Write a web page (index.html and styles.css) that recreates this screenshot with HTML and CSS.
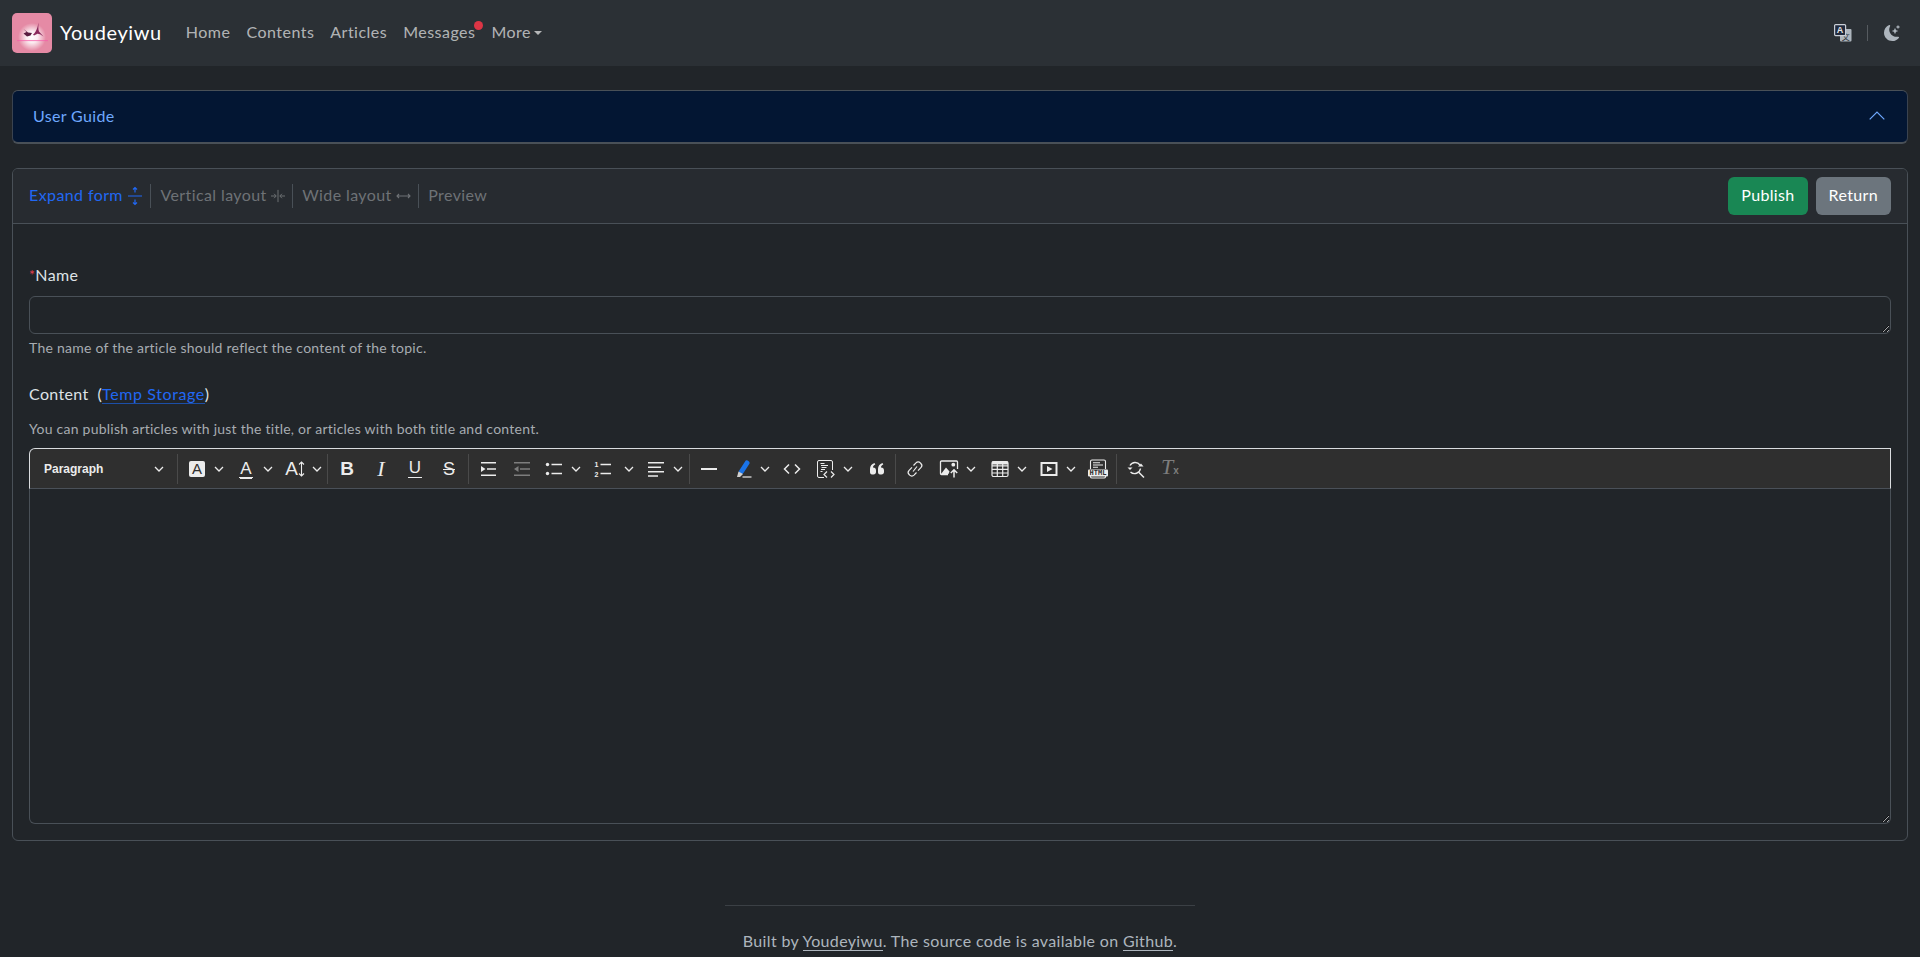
FILE: index.html
```html
<!DOCTYPE html>
<html lang="en">
<head>
  <meta charset="UTF-8">
  <title>Youdeyiwu - New Article</title>
  <link rel="stylesheet" href="styles.css">
</head>
<body>

<svg class="defs" width="0" height="0">
  <symbol id="chev" viewBox="0 0 10 10"><path d="M1 3 5 7 9 3" fill="none" stroke="currentColor" stroke-width="1.3"/></symbol>
  <radialGradient id="glow">
    <stop offset="0" stop-color="#fff"/>
    <stop offset="0.4" stop-color="#fff" stop-opacity="0.85"/>
    <stop offset="1" stop-color="#fff" stop-opacity="0"/>
  </radialGradient>
</svg>

<nav class="navbar">
  <a class="brand" href="#">
    <svg class="logo" viewBox="0 0 40 40">
      <rect width="40" height="40" rx="5" fill="#e58aa5"/>
      <ellipse cx="20" cy="24" rx="14" ry="14" fill="url(#glow)"/>
      <rect x="5" y="27.300" width="31" height="0.800" fill="#f55fa8"/>
      <path d="M21 21.500C24 19.500 25.500 15 26.500 9.500c0 4-.5 7 .5 9l4.500 5C28 21 26 20.500 25 21l-3 1.500z" fill="#8a2a5c"/>
      <path d="M11.500 16l4.500 3.500 4 .5-1.500 2.500-3.500 1-3.500-3 3-1.500z" fill="#5a1c40"/>
    </svg>
    <span class="brand-name">Youdeyiwu</span>
  </a>
  <ul class="nav-links">
    <li><a href="#">Home</a></li>
    <li><a href="#">Contents</a></li>
    <li><a href="#">Articles</a></li>
    <li class="has-badge"><a href="#">Messages</a><span class="badge"></span></li>
    <li><a href="#" class="caret">More</a></li>
  </ul>
  <div class="nav-right">
    <svg class="translate" width="18" height="18" viewBox="0 0 18 18">
      <rect x="6" y="5" width="11.500" height="12.500" rx="1" fill="#adb5bd"/>
      <text x="11.800" y="15.500" class="zh">文</text>
      <rect x="0.600" y="0.600" width="11" height="11" rx="1" fill="#212a3d" stroke="#c9ced6" stroke-width="1.200"/>
      <text x="6.100" y="9.300" class="en">A</text>
    </svg>
    <span class="nav-sep"></span>
    <svg width="16" height="16" viewBox="0 0 16 16" fill="#adb5bd">
      <path d="M6 .278a.768.768 0 0 1 .08.858 7.208 7.208 0 0 0-.878 3.46c0 4.021 3.278 7.277 7.318 7.277.527 0 1.04-.055 1.533-.16a.787.787 0 0 1 .81.316.733.733 0 0 1-.031.893A8.349 8.349 0 0 1 8.344 16C3.734 16 0 12.286 0 7.71 0 4.266 2.114 1.312 5.124.06A.752.752 0 0 1 6 .278z"/>
      <path d="M10.794 3.148a.217.217 0 0 1 .412 0l.387 1.162c.173.518.579.924 1.097 1.097l1.162.387a.217.217 0 0 1 0 .412l-1.162.387a1.734 1.734 0 0 0-1.097 1.097l-.387 1.162a.217.217 0 0 1-.412 0l-.387-1.162A1.734 1.734 0 0 0 9.31 6.593l-1.162-.387a.217.217 0 0 1 0-.412l1.162-.387a1.734 1.734 0 0 0 1.097-1.097l.387-1.162zM13.863.099a.145.145 0 0 1 .274 0l.258.774c.115.346.386.617.732.732l.774.258a.145.145 0 0 1 0 .274l-.774.258a1.156 1.156 0 0 0-.732.732l-.258.774a.145.145 0 0 1-.274 0l-.258-.774a1.156 1.156 0 0 0-.732-.732l-.774-.258a.145.145 0 0 1 0-.274l.774-.258c.346-.115.617-.386.732-.732L13.863.1z"/>
    </svg>
  </div>
</nav>

<main class="content">

  <div class="guide">
    <span>User Guide</span>
    <svg width="18" height="18" viewBox="0 0 16 16"><path d="M1.500 11 8 4.500 14.500 11" fill="none" stroke="currentColor" stroke-width="1.100"/></svg>
  </div>

  <section class="card">
    <div class="card-header">
      <div class="tabs">
        <a class="tab active" href="#">Expand form
          <svg width="16" height="20" viewBox="0 0 16 20" fill="none" stroke="currentColor" stroke-width="1.200"><path d="M1 10h14M8 1.500v5M6 3.500l2-2 2 2M8 18.500v-5M6 16.500l2 2 2-2"/></svg>
        </a>
        <a class="tab" href="#">Vertical layout
          <svg width="14" height="20" viewBox="0 0 16 20" fill="none" stroke="currentColor" stroke-width="1.100"><path d="M8 3v14M0 10h5.500M3.500 7.500 6 10l-2.500 2.500M16 10h-5.500M12.500 7.500 10 10l2.500 2.500"/></svg>
        </a>
        <a class="tab" href="#">Wide layout
          <svg width="15" height="20" viewBox="0 0 15 20" fill="none" stroke="currentColor" stroke-width="1.100"><path d="M1 10h13M3 8l-2 2 2 2M12 8l2 2-2 2"/></svg>
        </a>
        <a class="tab" href="#">Preview</a>
      </div>
      <div class="actions">
        <button class="btn btn-green">Publish</button>
        <button class="btn btn-gray">Return</button>
      </div>
    </div>

    <div class="card-body">
      <label class="field-label"><span class="star">*</span>Name</label>
      <textarea class="name-input" rows="1"></textarea>
      <div class="help">The name of the article should reflect the content of the topic.</div>

      <div class="field-label content-label">Content&nbsp; (<a href="#">Temp Storage</a>)</div>
      <div class="help help-top">You can publish articles with just the title, or articles with both title and content.</div>

      <div class="editor">
        <div class="toolbar">
          <div class="tb-para"><span>Paragraph</span><svg class="chev"><use href="#chev"/></svg></div>
          <i class="tb-sep"></i>

          <div class="tb-dd"><span class="tb-icon"><b class="letter-box">A</b></span><svg class="chev"><use href="#chev"/></svg></div>
          <div class="tb-dd"><span class="tb-icon"><span class="letter letter-line">A</span></span><svg class="chev"><use href="#chev"/></svg></div>
          <div class="tb-dd tb-narrow"><span class="tb-icon"><span class="letter letter-big">A</span><svg width="7" height="16" viewBox="0 0 7 16" fill="none" stroke="currentColor" stroke-width="1.100"><path d="M3.500 1v14M1 3.500l2.500-2.500L6 3.500M1 12.500 3.500 15 6 12.500"/></svg></span><svg class="chev"><use href="#chev"/></svg></div>
          <i class="tb-sep"></i>

          <span class="tb-icon"><span class="letter letter-bold">B</span></span>
          <span class="tb-icon"><span class="letter letter-italic">I</span></span>
          <span class="tb-icon"><span class="letter letter-under">U</span></span>
          <span class="tb-icon"><span class="letter letter-strike">S</span></span>
          <i class="tb-sep tb-sep-gap"></i>

          <span class="tb-icon">
            <svg width="20" height="20" viewBox="0 0 20 20" fill="currentColor"><path d="M3 3h15v1.500H3zM9 9.200h9v1.500H9zM3 15.600h15v1.500H3zM3 7l4.500 3L3 13z"/></svg>
          </span>
          <span class="tb-icon tb-off tb-short">
            <svg width="20" height="20" viewBox="0 0 20 20" fill="currentColor"><path d="M2 3h16v1.500H2zM8 9.200h10v1.500H8zM2 15.600h16v1.500H2zM6.500 7 2 10l4.500 3z"/></svg>
          </span>
          <div class="tb-dd">
            <span class="tb-icon"><svg width="20" height="20" viewBox="0 0 20 20" fill="currentColor"><circle cx="3.500" cy="5.500" r="1.700"/><circle cx="3.500" cy="14.500" r="1.700"/><path d="M7.500 4.700H18v1.500H7.500zM7.500 13.800H18v1.500H7.500z"/></svg></span>
            <svg class="chev"><use href="#chev"/></svg>
          </div>
          <div class="tb-dd tb-wide4">
            <span class="tb-icon"><svg width="20" height="20" viewBox="0 0 20 20" fill="currentColor"><text x="3.500" y="8" class="num">1</text><text x="3.500" y="18" class="num">2</text><path d="M7.500 4.700H18v1.500H7.500zM7.500 13.800H18v1.500H7.500z"/></svg></span>
            <svg class="chev"><use href="#chev"/></svg>
          </div>
          <div class="tb-dd">
            <span class="tb-icon"><svg width="20" height="20" viewBox="0 0 20 20" fill="currentColor"><path d="M2 3h16v1.500H2zM2 7.500h13v1.500H2zM2 12h16v1.500H2zM2 16.200h10v1.500H2z"/></svg></span>
            <svg class="chev"><use href="#chev"/></svg>
          </div>
          <i class="tb-sep"></i>

          <span class="tb-icon"><svg width="20" height="20" viewBox="0 0 20 20" fill="currentColor"><rect x="2" y="9" width="16" height="2"/></svg></span>
          <div class="tb-dd">
            <span class="tb-icon"><svg width="20" height="20" viewBox="0 0 20 20"><path d="M14 4 8.500 12.500" fill="none" stroke="#1a73e8" stroke-width="5" stroke-linecap="round"/><path d="M4 18l1.500-5.500 4.500 2.500-3 3z" fill="#cfcfcf"/><path d="M9.500 18h9" stroke="currentColor" stroke-width="1.200"/></svg></span>
            <svg class="chev"><use href="#chev"/></svg>
          </div>
          <span class="tb-icon"><svg width="20" height="20" viewBox="0 0 20 20" fill="none" stroke="currentColor" stroke-width="1.500"><path d="M7 5.500 2.500 10 7 14.500M13 5.500l4.500 4.500-4.500 4.500"/></svg></span>
          <div class="tb-dd tb-wide2">
            <span class="tb-icon"><svg width="20" height="20" viewBox="0 0 20 20" fill="none" stroke="currentColor" stroke-width="1"><path d="M8 18.500H3a1.500 1.500 0 0 1-1.500-1.500V3A1.500 1.500 0 0 1 3 1.500h12A1.500 1.500 0 0 1 16.500 3v8"/><path d="M4.500 4.500h4M5 6.500h7M5.500 8.500h5M5 10.500h4M4.500 12.500h2"/><path d="M11 12.500 8 15.500l3 3M15 12.500l3 3-3 3" stroke-width="1.200"/></svg></span>
            <svg class="chev"><use href="#chev"/></svg>
          </div>
          <span class="tb-icon"><svg width="20" height="20" viewBox="0 0 20 20" fill="currentColor"><path d="M3 10c0-3 1.500-5 4.500-6l.8 1.500C6.800 6.200 6 7 6 8.500c2 0 3 1 3 3v1.500c0 1.500-1 2.500-2.500 2.500H5c-1.300 0-2-1-2-2.500zM11 10c0-3 1.500-5 4.500-6l.8 1.500c-1.500.7-2.300 1.500-2.300 3 2 0 3 1 3 3v1.500c0 1.500-1 2.500-2.500 2.500H13c-1.300 0-2-1-2-2.500z"/></svg></span>
          <i class="tb-sep"></i>

          <span class="tb-icon"><svg width="20" height="20" viewBox="0 0 20 20" fill="none" stroke="currentColor" stroke-width="1.200"><path d="M8.500 6.500 11 3.800a3 3 0 0 1 4.300 0l.6.700a3 3 0 0 1 0 4.200L13 11.700"/><path d="M11.500 13.500 9 16.200a3 3 0 0 1-4.300 0l-.6-.7a3 3 0 0 1 0-4.200L7 8.300"/><path d="M8 12.500l4-5"/></svg></span>
          <div class="tb-dd tb-wide2">
            <span class="tb-icon"><svg width="20" height="20" viewBox="0 0 20 20"><path d="M9 15.500H2.500a1 1 0 0 1-1-1V3a1 1 0 0 1 1-1h15a1 1 0 0 1 1 1v7" fill="none" stroke="currentColor" stroke-width="1.300"/><path d="M2 15l5-6.500 3.500 4L9.500 15z" fill="currentColor"/><circle cx="14.300" cy="5.700" r="1.900" fill="currentColor"/><path d="M15 18.500V11M11.800 14l3.200-3.200 3.200 3.200" fill="none" stroke="currentColor" stroke-width="1.500"/></svg></span>
            <svg class="chev"><use href="#chev"/></svg>
          </div>
          <div class="tb-dd">
            <span class="tb-icon"><svg width="20" height="20" viewBox="0 0 20 20" fill="none" stroke="currentColor" stroke-width="1.200"><rect x="2" y="2.500" width="16" height="15" rx="1.500"/><path d="M2 2.500h16V5.500H2z" fill="currentColor" stroke="none"/><path d="M2 6.800h16M2 10.400h16M2 14h16M7.300 3v14M12.700 3v14"/></svg></span>
            <svg class="chev"><use href="#chev"/></svg>
          </div>
          <div class="tb-dd">
            <span class="tb-icon"><svg width="20" height="20" viewBox="0 0 20 20"><path fill-rule="evenodd" d="M1.500 3h17v14h-17zM3.500 5v10h13V5z" fill="currentColor"/><path d="M8 7l5.500 3L8 13z" fill="currentColor"/></svg></span>
            <svg class="chev"><use href="#chev"/></svg>
          </div>
          <span class="tb-icon"><svg width="20" height="20" viewBox="0 0 20 20" fill="none" stroke="currentColor" stroke-width="1.100"><path d="M2.500 10V2.500a1.500 1.500 0 0 1 1.500-1.500h12a1.500 1.500 0 0 1 1.500 1.500V10M2.500 17v1a1.500 1.500 0 0 0 1.500 1h12a1.500 1.500 0 0 0 1.500-1v-1"/><path d="M5 3.800h7M5 6h10M5 8.200h5"/><rect x="0" y="10.500" width="20" height="7" rx="1" fill="currentColor" stroke="none"/><text x="10" y="16.300" class="html-txt">HTML</text></svg></span>
          <i class="tb-sep"></i>

          <span class="tb-icon"><svg width="20" height="20" viewBox="0 0 20 20" fill="none" stroke="currentColor" stroke-width="1.500"><path d="M12.500 13 18 18.500"/><path d="M4 6.500A6 6 0 0 1 14 6M14.500 9.500a6 6 0 0 1-10 3.500" stroke-width="1.400"/><path d="M1.500 8.500h5L4 11z" fill="currentColor" stroke="none"/><path d="M12 7.500h5.500L15 4.500z" fill="currentColor" stroke="none"/></svg></span>
          <span class="tb-icon tb-off"><span class="letter letter-clear">T<small>x</small></span></span>
        </div>
        <div class="editor-body" contenteditable="true"></div>
      </div>
    </div>
  </section>

</main>

<footer class="footer">
  <hr>
  <p>Built by <a href="#">Youdeyiwu</a>. The source code is available on <a href="#">Github</a>.</p>
</footer>

</body>
</html>
```

FILE: styles.css
```css
* {
  box-sizing: border-box;
}
html, body {
  margin: 0;
}
body {
  font-family: "Lato", "Open Sans", sans-serif;
  font-size: 16px;
  line-height: 24px;
  letter-spacing: 0.35px;
  background-color: #212529;
  color: #dee2e6;
  overflow-x: hidden;
}
a {
  color: inherit;
  text-decoration: none;
}
.defs {
  position: absolute;
}

/* navbar */
.navbar {
  display: flex;
  align-items: center;
  height: 66px;
  padding: 0 12px;
  background-color: #2b3035;
}
.brand {
  display: flex;
  align-items: center;
  gap: 8px;
  color: #fff;
  font-size: 20px;
  letter-spacing: 0.62px;
  margin-right: 24px;
}
.brand-name {
  padding-bottom: 3px;
}
.logo {
  width: 40px;
  height: 40px;
  display: block;
}
.nav-links {
  display: flex;
  gap: 16px;
  list-style: none;
  margin: 0 0 2px;
  padding: 0;
  color: rgba(255,255,255,0.65);
  letter-spacing: 0.48px;
}
.has-badge {
  position: relative;
}
.badge {
  position: absolute;
  top: 1px;
  right: -8px;
  width: 9px;
  height: 9px;
  border-radius: 50%;
  background-color: #dc3545;
}
.caret::after {
  content: "";
  display: inline-block;
  margin-left: 3px;
  vertical-align: 3px;
  border-top: 4px solid;
  border-left: 4px solid transparent;
  border-right: 4px solid transparent;
}
.nav-right {
  margin-left: auto;
  display: flex;
  align-items: center;
  gap: 15px;
  padding-right: 8px;
}
.nav-sep {
  width: 1px;
  height: 16px;
  margin-right: 1px;
  background-color: #565b60;
}
.translate .zh {
  font-family: "Noto Sans CJK SC", sans-serif;
  font-size: 8px;
  text-anchor: middle;
  fill: #2b3035;
  letter-spacing: 0;
}
.translate .en {
  font-family: "Liberation Sans", sans-serif;
  font-size: 9px;
  font-weight: 700;
  text-anchor: middle;
  fill: #e6e8ea;
  letter-spacing: 0;
}

/* main */
.content {
  padding: 24px 12px 0;
}
.guide {
  display: flex;
  align-items: center;
  justify-content: space-between;
  height: 54px;
  padding: 0 20px 1px;
  background-color: #031633;
  color: #6ea8fe;
  border: 1px solid #495057;
  border-bottom-width: 2px;
  border-left-color: #3a4350;
  border-right-color: #3a4350;
  border-radius: 6px;
  margin-bottom: 24px;
}
.guide svg {
  margin-right: 1px;
}
.card {
  border: 1px solid #495057;
  border-radius: 6px;
}
.card-header {
  display: flex;
  align-items: center;
  justify-content: space-between;
  height: 55px;
  padding: 0 16px;
  background-color: #272b30;
  border-bottom: 1px solid #495057;
  border-radius: 5px 5px 0 0;
}
.tabs {
  display: flex;
  align-items: center;
  letter-spacing: 0.4px;
}
.tab {
  display: flex;
  align-items: flex-start;
  gap: 4px;
  height: 24px;
  line-height: 22px;
  padding: 0 7.5px 0 9px;
  color: #6e7276;
  border-left: 1px solid #495057;
}
.tab svg {
  align-self: center;
}
.tab:first-child {
  padding-left: 0;
  border-left: none;
}
.tab.active {
  color: #2168f3;
}
.actions {
  display: flex;
  gap: 8px;
}
.btn {
  height: 38px;
  padding: 0 13px 2px;
  font: inherit;
  letter-spacing: inherit;
  color: #fff;
  border: none;
  border-radius: 6px;
  cursor: pointer;
}
.btn-green {
  background-color: #198754;
}
.btn-gray {
  background-color: #6c757d;
}

/* form */
.card-body {
  padding: 39px 16px 16px;
}
.field-label {
  display: block;
  margin-bottom: 9px;
}
.star {
  color: #e0404f;
  font-size: 14px;
  vertical-align: 1px;
}
.name-input {
  display: block;
  width: 100%;
  height: 38px;
  background-color: #212529;
  border: 1px solid #495057;
  border-radius: 6px;
  color: #dee2e6;
  font: inherit;
  padding: 6px 12px;
}
.help {
  margin-top: 3px;
  font-size: 14px;
  line-height: 21px;
  letter-spacing: 0.25px;
  color: #a7acb1;
}
.help-top {
  margin-top: 0;
  margin-bottom: 9px;
}
.content-label {
  margin-top: 24px;
  margin-bottom: 12px;
}
.content-label a {
  color: #2168f3;
  letter-spacing: 0.6px;
  border-bottom: 1px solid #1c4fa8;
}

/* editor */
.toolbar {
  display: flex;
  align-items: center;
  height: 41px;
  background-color: #2f2f2f;
  color: #ececec;
  border: 1px solid #d9dcdf;
  border-bottom-color: #4a5058;
  border-radius: 6px 0 0 0;
  letter-spacing: 0;
}
.tb-para {
  display: flex;
  align-items: center;
  justify-content: space-between;
  width: 146px;
  padding: 0 12px 0 14px;
  font-family: "Liberation Sans", sans-serif;
  font-size: 12px;
  font-weight: 700;
}
.tb-sep {
  width: 1px;
  height: 30px;
  margin: 0 2px 0 1px;
  background-color: #4a4a4a;
}
.tb-sep-gap {
  margin-left: 2px;
}
.tb-icon {
  display: flex;
  align-items: center;
  justify-content: center;
  flex: none;
  width: 34px;
  height: 28px;
}
.tb-short {
  margin-right: -2px;
}
.tb-off {
  color: #7d7d7d;
}
.tb-dd {
  display: flex;
  align-items: center;
  flex: none;
  width: 49px;
}
.tb-narrow {
  width: 48px;
}
.tb-wide2 {
  width: 51px;
}
.tb-wide4 {
  width: 53px;
}
.tb-wide4 .chev {
  margin-left: 4px;
}
.chev {
  width: 10px;
  height: 10px;
  flex: none;
}
.letter {
  font-family: "Liberation Sans", sans-serif;
  font-size: 18px;
  line-height: 20px;
}
.letter-box {
  display: block;
  width: 16px;
  height: 16px;
  line-height: 16px;
  text-align: center;
  font-family: "Liberation Sans", sans-serif;
  font-size: 15px;
  font-weight: 400;
  background-color: #ececec;
  color: #2f2f2f;
  border-radius: 2px;
}
.letter-line {
  display: block;
  font-size: 17px;
  line-height: 17px;
  border-bottom: 1px solid;
  box-shadow: 0 2px 0 -1px #ececec;
  padding: 0 1px;
}
.letter-big {
  font-size: 19px;
}
.letter-bold {
  font-weight: 700;
  font-size: 19px;
}
.letter-italic {
  font-family: "Liberation Serif", serif;
  font-style: italic;
  font-size: 22px;
}
.letter-under {
  display: block;
  font-size: 17px;
  line-height: 16px;
  padding: 0 1px 1px;
  border-bottom: 1.5px solid;
}
.letter-strike {
  font-size: 18px;
  text-decoration: line-through;
  text-decoration-thickness: 1px;
}
.letter-clear {
  font-family: "Liberation Serif", serif;
  font-style: italic;
  font-size: 22px;
}
.letter-clear small {
  font-family: "Liberation Sans", sans-serif;
  font-style: normal;
  font-weight: 700;
  font-size: 10px;
}
.num {
  font-family: "Liberation Sans", sans-serif;
  font-size: 7px;
  font-weight: 700;
  text-anchor: middle;
}
.html-txt {
  font-family: "DejaVu Sans Mono", monospace;
  font-size: 7px;
  font-weight: 700;
  text-anchor: middle;
  fill: #2f2f2f;
  stroke: none;
}
.editor-body {
  display: block;
  height: 335px;
  border: 1px solid #495057;
  border-top: none;
  border-radius: 0 0 6px 6px;
  overflow: auto;
  resize: vertical;
  outline: none;
}

/* footer */
.footer {
  padding-top: 64px;
  text-align: center;
  color: #adb5bd;
}
.footer hr {
  width: 470px;
  margin: 0 auto 23px;
  border: none;
  border-top: 1px solid #3b4045;
}
.footer p {
  margin: 0;
  padding-bottom: 4px;
}
.footer a {
  border-bottom: 1px solid #adb5bd;
}
```
